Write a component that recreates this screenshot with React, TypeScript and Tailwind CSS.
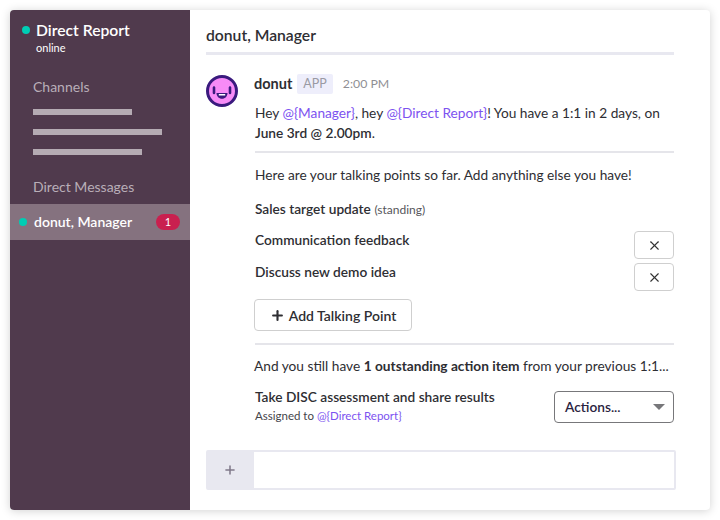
import { Plus, X } from "lucide-react";

const Avatar = () => (
  <svg width="32" height="32" viewBox="0 0 32 32" className="shrink-0">
    <circle cx="16" cy="16" r="14.5" fill="#f78bf7" stroke="#3a1a7e" strokeWidth="3" />
    <path d="M8 12.5v5.5M24 12.5v5.5" stroke="#3a1a7e" strokeWidth="2.6" strokeLinecap="round" />
    <path d="M10.5 18h11c0 3.4-2.4 5.8-5.5 5.8s-5.5-2.4-5.5-5.8z" fill="#3a1a7e" />
    <path d="M12.8 19h6.4v1.4h-6.4z" fill="#fff" />
  </svg>
);

const Mention = ({ children }: { children: string }) => (
  <span className="text-[#7d53f0]">{children}</span>
);

const RemoveButton = () => (
  <button className="flex h-[28px] w-[40px] items-center justify-center rounded-[4px] border border-[#cfcfcf] bg-white text-[#333]">
    <X size={15} strokeWidth={1.8} />
  </button>
);

const App = () => {
  return (
    <div className="h-[520px] w-[720px] bg-white p-[10px] font-['Lato',sans-serif] text-[13.7px] text-[#2e2e33]">
      <div className="flex h-[500px] overflow-hidden rounded-[4px] bg-white shadow-[0_1px_10px_rgba(0,0,0,0.18)]">
        <div className="w-[180px] shrink-0 bg-[#503a4d] text-white">
          <div className="flex items-center gap-[6px] pl-[12px] pt-[10px]">
            <span className="h-[8px] w-[8px] rounded-full bg-[#00cdb4]" />
            <span className="text-[15.7px] font-semibold leading-[20px]">Direct Report</span>
          </div>
          <div className="pl-[26px] pt-[1px] text-[11px] leading-[14px]">online</div>

          <div className="pl-[23px] pt-[22px] text-[14px] leading-[20px] text-[#b9aeb8]">Channels</div>
          <div className="flex flex-col gap-[14px] pl-[23px] pt-[12px]">
            <div className="h-[6px] w-[99px] bg-[#b5abb3]" />
            <div className="h-[6px] w-[129px] bg-[#b5abb3]" />
            <div className="h-[6px] w-[109px] bg-[#b5abb3]" />
          </div>
          <div className="pl-[23px] pt-[22px] text-[14px] leading-[20px] text-[#b9aeb8]">Direct Messages</div>
          <div className="mt-[7px] flex h-[36px] items-center bg-[#85727f] pl-[9px] pr-[10px]">
            <span className="h-[8px] w-[8px] rounded-full bg-[#00cdb4]" />
            <span className="ml-[7px] flex-1 pb-[2px] text-[14px] font-semibold">donut, Manager</span>
            <span className="flex h-[16px] w-[24px] items-center justify-center rounded-full bg-[#c9204f] text-[11px]">1</span>
          </div>
        </div>

        <div className="flex min-w-0 flex-1 flex-col pl-[16px] pr-[36px]">
          <div className="flex h-[45px] items-end border-b-[3px] border-[#e8e8f0] pb-[7px] text-[15.7px] font-semibold leading-[20px]">
            donut, Manager
          </div>

          <div className="flex pt-[20px]">
            <Avatar />
            <div className="ml-[17px] min-w-0 flex-1">
              <div className="-ml-[1px] flex h-[20px] -translate-y-[1px] items-center">
                <span className="text-[14.5px] font-bold">donut</span>
                <span className="ml-[5px] flex h-[20px] items-center rounded-[2px] bg-[#eeeefb] px-[6px] text-[12.5px] text-[#9a9aa3]">APP</span>
                <span className="ml-[10px] text-[12.3px] text-[#8f8f94]">2:00 PM</span>
              </div>
              <p className="mt-[8px] leading-[19.5px]">
                Hey <Mention>{"@{Manager}"}</Mention>, hey <Mention>{"@{Direct Report}"}</Mention>! You have a 1:1 in 2 days, on{" "}
                <span className="font-semibold">June 3rd @ 2.00pm</span>.
              </p>
              <div className="mt-[9px] h-[2px] bg-[#e5e5ea]" />
              <p className="mt-[12px] leading-[20px]">Here are your talking points so far. Add anything else you have!</p>
              <div className="mt-[14px] leading-[20px]">
                <span className="font-semibold">Sales target update</span>{" "}
                <span className="text-[12px] text-[#55555a]">(standing)</span>
              </div>
              <div className="mt-[9px] flex items-start justify-between">
                <span className="mt-[1px] font-semibold leading-[20px]">Communication feedback</span>
                <div className="mt-[2px]"><RemoveButton /></div>
              </div>
              <div className="mt-[4px] flex items-start justify-between">
                <span className="-mt-[1px] font-semibold leading-[20px]">Discuss new demo idea</span>
                <RemoveButton />
              </div>
              <button className="-ml-[1px] mt-[8px] flex h-[32px] w-[158px] items-center justify-center gap-[4px] rounded-[4px] border border-[#cfcfcf] bg-white text-[14px] font-semibold">
                <Plus size={15} strokeWidth={3.4} />
                Add Talking Point
              </button>
              <div className="mt-[12px] h-[2px] bg-[#e5e5ea]" />
              <p className="-ml-[1px] mt-[11px] whitespace-nowrap leading-[20px]">
                And you still have <span className="font-bold">1 outstanding action item</span> from your previous 1:1...
              </p>
              <div className="mt-[11px] flex items-start justify-between">
                <div>
                  <div className="font-semibold leading-[20px]">Take DISC assessment and share results</div>
                  <div className="text-[11.5px] leading-[18px] text-[#44444a]">
                    Assigned to <Mention>{"@{Direct Report}"}</Mention>
                  </div>
                </div>
                <div className="mt-[4px] flex h-[32px] w-[120px] items-center justify-between rounded-[4px] border border-[#77777a] bg-white pl-[10px] pr-[8px] font-semibold text-[#2a2340]">
                  Actions...
                  <span className="h-0 w-0 border-x-[6px] border-t-[6px] border-x-transparent border-t-[#77777a]" />
                </div>
              </div>
            </div>
          </div>

          <div className="mt-auto mb-[20px] flex h-[40px] w-[470px] rounded-[2px] border-[2px] border-[#e8e8f0]">
            <div className="flex w-[46px] items-center justify-center bg-[#e8e8f0] pr-[2px] text-[#7f7889]">
              <Plus size={14} strokeWidth={2.6} />
            </div>
            <div className="flex-1 bg-white" />
          </div>
        </div>
      </div>
    </div>
  );
};

export default App;
